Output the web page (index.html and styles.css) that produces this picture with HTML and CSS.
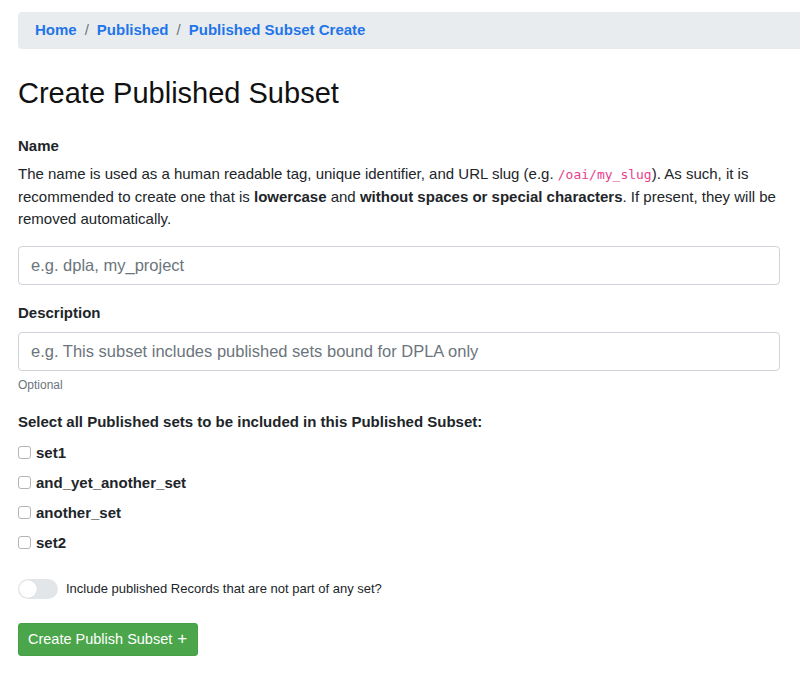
FILE: index.html
```html
<!DOCTYPE html>
<html>
<head>
<meta charset="utf-8">
<link rel="stylesheet" href="styles.css">
</head>
<body>
<nav class="breadcrumb">
  <a href="#">Home</a><span class="sep">/</span><a href="#">Published</a><span class="sep">/</span><a href="#">Published Subset Create</a>
</nav>
<h1 class="title">Create Published Subset</h1>
<form class="form">
  <div class="group">
    <label class="label">Name</label>
    <p class="help">The name is used as a human readable tag, unique identifier, and URL slug (e.g. <code>/oai/my_slug</code>). As such, it is recommended to create one that is <b>lowercase</b> and <b>without spaces or special characters</b>. If present, they will be removed automatically.</p>
    <input class="input" type="text" placeholder="e.g. dpla, my_project">
  </div>
  <div class="group">
    <label class="label">Description</label>
    <input class="input input-desc" type="text" placeholder="e.g. This subset includes published sets bound for DPLA only">
    <small class="muted">Optional</small>
  </div>
  <div class="group sets">
    <label class="label">Select all Published sets to be included in this Published Subset:</label>
    <div class="check"><span class="box"></span><span>set1</span></div>
    <div class="check"><span class="box"></span><span>and_yet_another_set</span></div>
    <div class="check"><span class="box"></span><span>another_set</span></div>
    <div class="check"><span class="box"></span><span>set2</span></div>
  </div>
  <div class="switch-row">
    <span class="switch"><span class="knob"></span></span>
    <span class="switch-label">Include published Records that are not part of any set?</span>
  </div>
  <button class="btn" type="button">Create Publish Subset <span class="plus">+</span></button>
</form>
</body>
</html>
```
FILE: styles.css
```css
html, body {
  margin: 0;
  padding: 0;
  background: #fff;
}
body {
  font-family: "Liberation Sans", Arial, sans-serif;
  font-size: 15px;
  line-height: 1.5;
  color: #212529;
  padding: 12px 20px 0 18px;
  overflow: hidden;
}
.breadcrumb {
  display: flex;
  align-items: center;
  height: 37px;
  background: #e9ecef;
  border-radius: 4px 0 0 4px;
  margin-right: -20px;
  padding: 0 17px;
  font-weight: bold;
  font-size: 15px;
}
.breadcrumb a {
  color: #1f75e9;
  text-decoration: none;
}
.breadcrumb .sep {
  color: #6c757d;
  font-weight: normal;
  padding: 0 8px;
}
.title {
  font-size: 29px;
  font-weight: normal;
  line-height: 1.2;
  margin: 27px 0 0;
  color: #111;
}
.form {
  margin-top: 24px;
}
.group {
  margin-bottom: 17px;
}
.label {
  display: block;
  font-weight: bold;
  margin-bottom: 6px;
}
.help {
  margin: 0 0 15px;
}
code {
  font-family: "DejaVu Sans Mono", monospace;
  font-size: 13px;
  color: #e83e8c;
}
.input {
  display: block;
  width: 100%;
  box-sizing: border-box;
  height: 39px;
  padding: 6px 12px;
  font-family: inherit;
  font-size: 16.5px;
  border: 1px solid #ced4da;
  border-radius: 4px;
  color: #495057;
}
.input-desc {
  margin-top: 8px;
}
.input::placeholder {
  color: #6c757d;
}
.muted {
  display: block;
  font-size: 12px;
  color: #6c757d;
  margin-top: 5px;
}
.sets {
  margin-top: 16px;
}
.sets .label {
  margin-bottom: 4px;
}
.check {
  display: flex;
  align-items: center;
  height: 30px;
  font-weight: bold;
}
.box {
  width: 11px;
  height: 11px;
  border: 1px solid #b5b5b5;
  border-radius: 3px;
  margin-right: 5px;
  background: #fff;
}
.switch-row {
  display: flex;
  align-items: center;
  margin-top: 21px;
}
.switch {
  position: relative;
  width: 40px;
  height: 20px;
  border-radius: 10px;
  background: #e3e6e9;
  margin-right: 8px;
}
.knob {
  position: absolute;
  left: 1px;
  top: 1px;
  width: 18px;
  height: 18px;
  border-radius: 50%;
  background: #fff;
  box-shadow: 0 0 1px rgba(0,0,0,0.2);
}
.switch-label {
  font-size: 13px;
}
.btn {
  display: inline-block;
  margin-top: 24px;
  height: 33px;
  padding: 0 10px 0 9px;
  background: #4ba64b;
  color: #fff;
  border: 1px solid #46a046;
  border-radius: 3px;
  font-family: inherit;
  font-size: 14.5px;
}
.plus {
  font-weight: 300;
  font-size: 17px;
  margin-left: 1px;
}
```
